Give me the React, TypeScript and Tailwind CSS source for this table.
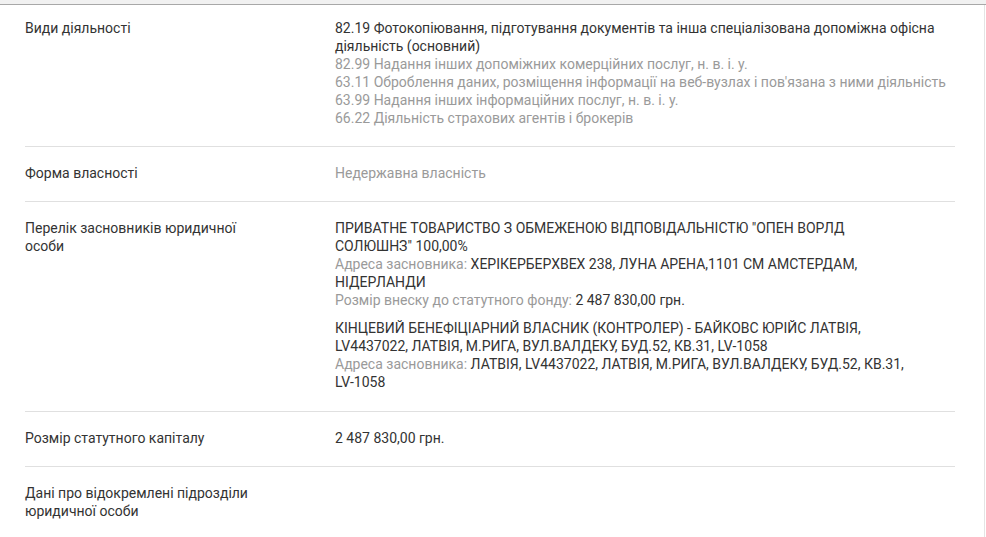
import React from "react";

const dark = "text-[#333333]";
const gray = "text-[#9a9a9a]";

function Row({
  label,
  children,
  first,
  last,
  extraBottom,
}: {
  label: React.ReactNode;
  children?: React.ReactNode;
  first?: boolean;
  last?: boolean;
  extraBottom?: boolean;
}) {
  return (
    <div
      className={`flex ${first ? "pt-[14px]" : "pt-[17px]"} ${extraBottom ? "pb-[20px]" : "pb-[19px]"} ${
        last ? "" : "border-b border-[#e0e0e0]"
      }`}
    >
      <div className="w-[310px] shrink-0 pr-[70px]">
        <div className={dark}>{label}</div>
      </div>
      <div className="flex-1 min-w-0">{children}</div>
    </div>
  );
}

export default function App() {
  return (
    <div
      className="w-[986px] h-[537px] overflow-hidden bg-white text-[14px] leading-[18px]"
      style={{ fontFamily: "Roboto, 'Noto Sans', sans-serif" }}
    >
      <div className="h-[5px] bg-[#f1f1f1] border-b border-[#a8a8a8]" />
      <div className="w-[985px] h-[532px] border-r border-[#e4e4e4]">
        <div className="ml-[25px] w-[930px]">
          <Row label="Види діяльності" first>
            <div className={dark}>
              82.19 Фотокопіювання, підготування документів та інша спеціалізована допоміжна
              офісна діяльність (основний)
            </div>
            <div className={gray}>82.99 Надання інших допоміжних комерційних послуг, н. в. і. у.</div>
            <div className={gray}>
              63.11 Оброблення даних, розміщення інформації на веб-вузлах і пов'язана з ними
              діяльність
            </div>
            <div className={gray}>63.99 Надання інших інформаційних послуг, н. в. і. у.</div>
            <div className={gray}>66.22 Діяльність страхових агентів і брокерів</div>
          </Row>
          <Row label="Форма власності">
            <div className={gray}>Недержавна власність</div>
          </Row>
          <Row label="Перелік засновників юридичної особи" extraBottom>
            <div className="w-[580px]">
              <div className={dark}>
                ПРИВАТНЕ ТОВАРИСТВО З ОБМЕЖЕНОЮ ВІДПОВІДАЛЬНІСТЮ "ОПЕН ВОРЛД СОЛЮШНЗ" 100,00%
              </div>
              <p className={dark}>
                <span className={gray}>Адреса засновника:</span> ХЕРІКЕРБЕРХВЕХ 238, ЛУНА
                АРЕНА,1101 СМ АМСТЕРДАМ, НІДЕРЛАНДИ
              </p>
              <p className={dark}>
                <span className={gray}>Розмір внеску до статутного фонду:</span> 2 487 830,00 грн.
              </p>
              <div className={`mt-[10px] ${dark}`}>
                КІНЦЕВИЙ БЕНЕФІЦІАРНИЙ ВЛАСНИК (КОНТРОЛЕР) - БАЙКОВС ЮРІЙС ЛАТВІЯ, LV4437022,
                ЛАТВІЯ, М.РИГА, ВУЛ.ВАЛДЕКУ, БУД.52, КВ.31, LV-1058
              </div>
              <p className={dark}>
                <span className={gray}>Адреса засновника:</span> ЛАТВІЯ, LV4437022, ЛАТВІЯ,
                М.РИГА, ВУЛ.ВАЛДЕКУ, БУД.52, КВ.31, LV-1058
              </p>
            </div>
          </Row>
          <Row label="Розмір статутного капіталу">
            <div className={dark}>2 487 830,00 грн.</div>
          </Row>
          <Row label="Дані про відокремлені підрозділи юридичної особи" last />
        </div>
      </div>
    </div>
  );
}
